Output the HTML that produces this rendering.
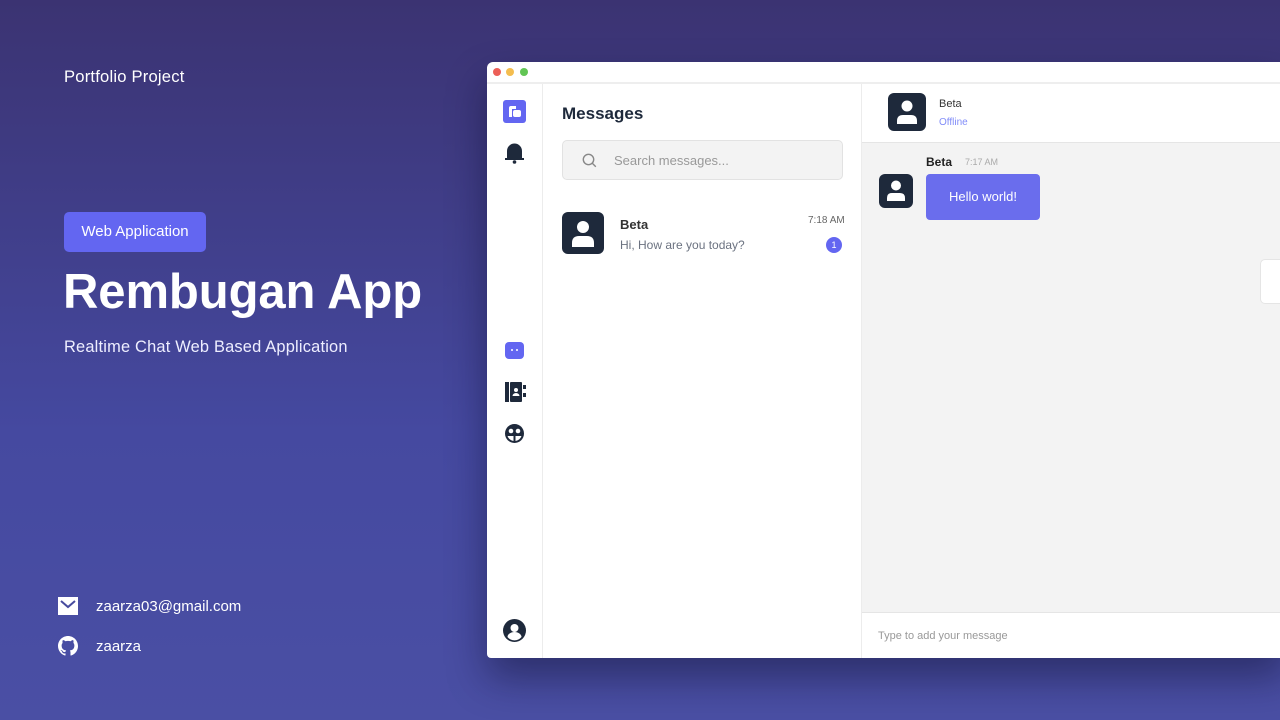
<!DOCTYPE html>
<html><head><meta charset="utf-8"><style>
*{margin:0;padding:0;box-sizing:border-box}
body{width:1280px;height:720px;overflow:hidden;font-family:"Liberation Sans",sans-serif;background:linear-gradient(180deg,#3b3372 0%,#4549a0 60%,#4a4fa4 100%);position:relative;color:#fff}
.abs{position:absolute}
.win{left:487px;top:62px;width:800px;height:596px;background:#fff;border-radius:6px 0 0 4px;box-shadow:0 20px 40px rgba(10,10,40,.45);overflow:hidden}
.dot{width:8px;height:8px;border-radius:50%;top:6px}
.av{background:#1e293b;border-radius:6px}
.dark{color:#1e293b}
</style></head><body>
<div class="abs" style="left:64px;top:67px;font-size:16.6px;letter-spacing:0.2px">Portfolio Project</div>
<div class="abs" style="left:64px;top:212px;width:142px;height:40px;background:#6366f1;border-radius:5px;font-size:15px;line-height:40px;text-align:center">Web Application</div>
<div class="abs" style="left:63px;top:264px;font-size:49px;font-weight:bold;letter-spacing:-0.1px">Rembugan App</div>
<div class="abs" style="left:64px;top:338px;font-size:16.4px;letter-spacing:0.2px;color:#eef">Realtime Chat Web Based Application</div>
<svg class="abs" style="left:58px;top:597px" width="20" height="18"><rect width="20" height="18" fill="#fff"/><path d="M3 4l7 6 7-6" stroke="#484c9e" stroke-width="2" fill="none"/></svg>
<div class="abs" style="left:96px;top:598px;font-size:15px">zaarza03@gmail.com</div>
<svg class="abs" style="left:58px;top:636px" width="20" height="20" viewBox="0 0 16 16"><path fill="#fff" d="M8 0C3.580 0 0 3.58 0 8c0 3.54 2.290 6.53 5.470 7.59.4.07.55-.17.55-.38v-1.33c-2.23.48-2.7-1.07-2.7-1.070-.36-.92-.89-1.17-.89-1.17-.73-.5.05-.49.05-.49.8.06 1.23.83 1.23.83.71 1.22 1.87.87 2.330.66.07-.52.28-.87.5-1.07-1.78-.2-3.64-.89-3.64-3.95 0-.87.31-1.59.82-2.15-.08-.2-.36-1.02.08-2.12 0 0 .67-.21 2.2.82a7.6 7.6 0 014 0c1.53-1.04 2.2-.82 2.2-.82.44 1.1.16 1.92.08 2.12.51.56.82 1.27.82 2.15 0 3.07-1.87 3.75-3.65 3.95.29.25.54.73.54 1.48v2.2c0 .21.15.46.55.38A8.01 8.01 0 0016 8c0-4.42-3.58-8-8-8z"/></svg>
<div class="abs" style="left:96px;top:638px;font-size:15px">zaarza</div>

<div class="abs win">
 <div class="abs dot" style="left:6px;background:#ec5f57"></div>
 <div class="abs dot" style="left:19px;background:#f4bd4f"></div>
 <div class="abs dot" style="left:33px;background:#62c554"></div>
 <div class="abs" style="left:0;top:20px;width:800px;height:2px;background:#eee"></div>
 <div class="abs" style="left:55px;top:22px;width:1px;height:574px;background:#ececec"></div>
 <svg class="abs" style="left:16px;top:38px" width="23" height="23"><rect width="23" height="23" rx="3" fill="#6366f1"/><path d="M6 17V8q0-2 2-2h5v3H9v8z" fill="#fff"/><rect x="10" y="10" width="8" height="7" rx="2" fill="#fff"/></svg>
 <svg class="abs" style="left:18px;top:80px" width="19" height="22"><path d="M2 17V9a7.5 7.5 0 0115 0v8z" fill="#1e293b"/><rect x="0" y="16" width="19" height="2" fill="#1e293b"/><circle cx="9.5" cy="20" r="1.8" fill="#1e293b"/></svg>
 <svg class="abs" style="left:18px;top:280px" width="19" height="17"><rect width="19" height="17" rx="4" fill="#6366f1"/><circle cx="7" cy="8" r="1" fill="#fff"/><circle cx="12" cy="8" r="1" fill="#fff"/></svg>
 <svg class="abs" style="left:18px;top:320px" width="21" height="20"><rect x="0" y="0" width="4" height="20" fill="#1e293b"/><rect x="5" y="0" width="12" height="20" rx="1" fill="#1e293b"/><circle cx="11" cy="8" r="2" fill="#fff"/><path d="M7.5 14a3.5 3 0 017 0z" fill="#fff"/><rect x="18" y="3" width="3" height="4" fill="#1e293b"/><rect x="18" y="11" width="3" height="4" fill="#1e293b"/></svg>
 <svg class="abs" style="left:18px;top:362px" width="19" height="19"><circle cx="9.5" cy="9.5" r="9.5" fill="#1e293b"/><circle cx="6" cy="7" r="2.3" fill="#fff"/><circle cx="13" cy="7" r="2.3" fill="#fff"/><path d="M2.5 12h6v5a8 8 0 01-6-5zM10.5 12h6a8 8 0 01-6 5z" fill="#fff"/></svg>
 <svg class="abs" style="left:16px;top:557px" width="23" height="23"><circle cx="11.5" cy="11.5" r="11.5" fill="#1e293b"/><circle cx="11.5" cy="9" r="4" fill="#fff"/><path d="M4.5 18a7 5 0 0114 0 9 9 0 01-14 0z" fill="#fff"/></svg>
 <div class="abs" style="left:374px;top:22px;width:1px;height:574px;background:#ececec"></div>
 <div class="abs dark" style="left:75px;top:42px;font-size:17px;font-weight:bold">Messages</div>
 <div class="abs" style="left:75px;top:78px;width:281px;height:40px;background:#f3f3f3;border:1px solid #e2e2e2;border-radius:5px"></div>
 <svg class="abs" style="left:95px;top:91px" width="15" height="15"><circle cx="6.5" cy="6.5" r="5.2" stroke="#888" stroke-width="1.4" fill="none"/><path d="M10.3 10.3l3.5 3.5" stroke="#888" stroke-width="1.4"/></svg>
 <div class="abs" style="left:127px;top:91px;font-size:13px;color:#999">Search messages...</div>
 <div class="abs av" style="left:75px;top:150px;width:42px;height:42px"></div>
 <svg class="abs" style="left:83px;top:158px" width="26" height="28"><circle cx="13" cy="7" r="6" fill="#fff"/><path d="M2 27v-4q0-7 7-7h8q7 0 7 7v4z" fill="#fff"/></svg>
 <div class="abs dark" style="left:133px;top:155px;font-size:13px;font-weight:bold;color:#333">Beta</div>
 <div class="abs" style="left:133px;top:176px;font-size:12px;color:#6b7280">Hi, How are you today?</div>
 <div class="abs" style="left:321px;top:153px;font-size:10px;color:#666">7:18 AM</div>
 <div class="abs" style="left:339px;top:175px;width:16px;height:16px;border-radius:50%;background:#6366f1;font-size:9px;line-height:16px;text-align:center">1</div>
 <div class="abs" style="left:375px;top:80px;width:425px;height:470px;background:#f3f3f3;border-top:1px solid #e5e5e5"></div>
 <div class="abs av" style="left:401px;top:31px;width:38px;height:38px"></div>
 <svg class="abs" style="left:408px;top:38px" width="24" height="25"><circle cx="12" cy="6" r="5.5" fill="#fff"/><path d="M2 24v-3q0-6 6-6h8q6 0 6 6v3z" fill="#fff"/></svg>
 <div class="abs" style="left:452px;top:36px;font-size:11px;color:#333">Beta</div>
 <div class="abs" style="left:452px;top:55px;font-size:10px;color:#818cf8">Offline</div>
 <div class="abs" style="left:439px;top:93px;font-size:12px;font-weight:bold;color:#222">Beta</div>
 <div class="abs" style="left:478px;top:95px;font-size:9px;color:#aaa">7:17 AM</div>
 <div class="abs av" style="left:392px;top:112px;width:34px;height:34px"></div>
 <svg class="abs" style="left:398px;top:118px" width="22" height="22"><circle cx="11" cy="5.5" r="5" fill="#fff"/><path d="M2 21v-3q0-5 5-5h8q5 0 5 5v3z" fill="#fff"/></svg>
 <div class="abs" style="left:439px;top:112px;width:114px;height:46px;background:#6a6ded;border-radius:4px;font-size:13px;line-height:46px;text-align:center">Hello world!</div>
 <div class="abs" style="left:773px;top:197px;width:40px;height:45px;background:#fff;border:1px solid #e5e5e5;border-radius:5px"></div>
 <div class="abs" style="left:375px;top:550px;width:425px;height:1px;background:#e5e5e5"></div>
 <div class="abs" style="left:391px;top:568px;font-size:11px;color:#999">Type to add your message</div>
</div>
</body></html>
